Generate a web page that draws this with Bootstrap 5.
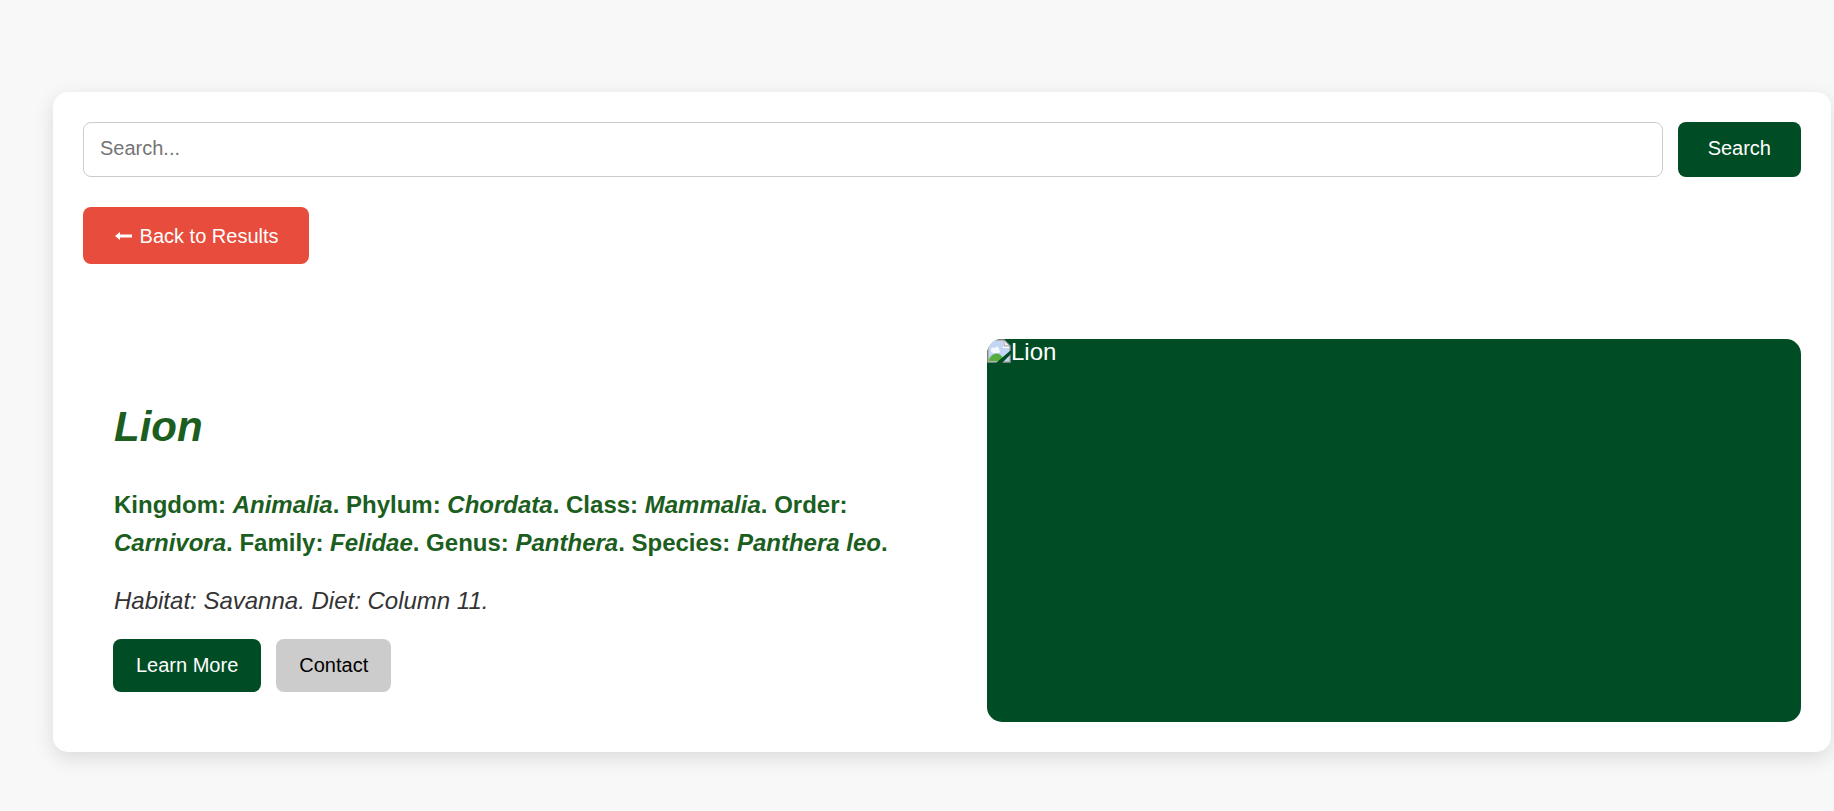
<!DOCTYPE html>
<html lang="en">
<head>
<meta charset="utf-8">
<meta name="viewport" content="width=device-width, initial-scale=1">
<title>Lion</title>
<link href="https://cdn.jsdelivr.net/npm/bootstrap@5.3.0/dist/css/bootstrap.min.css" rel="stylesheet">
<style>
  body { background: #f8f8f8; color: #333; font-family: "Liberation Sans", Arial, sans-serif; font-size: 24px; line-height: 38px; }
  .page-wrap { padding: 92px 3px 40px 53px; }
  .panel { background: #fff; border-radius: 15px; padding: 30px; box-shadow: 0 6px 20px rgba(0, 0, 0, .12); }
  .search-row { gap: 15px; margin-bottom: 30px; }
  .search-row .form-control { height: 55px; padding: 0 16px 2px; border: 1px solid #ccc; border-radius: 8px; font-size: 20px; }
  .form-control::placeholder { color: #757575; }
  .btn { border: 0; border-radius: 8px; font-size: 20px; line-height: 23px; padding: 15px 23px; }
  .btn-wide { padding: 15px 30px 17px; }
  .btn-forest, .btn-forest:hover { background: #004d25; color: #fff; }
  .btn-back, .btn-back:hover { background: #e74c3c; color: #fff; padding: 18px 30px 16px; }
  .btn-grey, .btn-grey:hover { background: #ccc; color: #000; }
  .detail { margin-top: 75px; gap: 30px; }
  .detail-text { flex: 1 1 0; padding: 30px; box-sizing: content-box; min-width: 0; }
  .detail-photo { flex: 1 1 0; min-width: 0; background: #004d25; color: #fff; border-radius: 15px; line-height: 26px; }
  .detail-photo svg { width: 24px; height: 24px; }
  h1 { color: #1b5e20; font-size: 42px; line-height: 66px; margin: 25px 0 26px; }
  .taxonomy { color: #1b5e20; margin-bottom: 20px; }
  .facts { margin-bottom: 19px; }
  h1, .taxonomy, .facts { padding-left: 1px; }
  .actions { gap: 15px; }
</style>
</head>
<body>
<main class="page-wrap">
  <section class="panel">
    <form class="search-row d-flex">
      <input class="form-control" id="query" type="text" placeholder="Search..." aria-label="Search">
      <button class="btn btn-wide btn-forest" type="button">Search</button>
    </form>
    <button class="btn btn-back d-flex align-items-center" type="button">
      <svg class="flex-shrink-0" width="21" height="20" viewBox="0 0 21 20" aria-hidden="true"><path fill="currentColor" d="M2 9L7 5v2.500h12v3H7V13z"/></svg><span>&nbsp;Back to Results</span>
    </button>
    <article class="detail d-flex">
      <div class="detail-text">
        <h1 class="fw-bold fst-italic">Lion</h1>
        <p class="taxonomy fw-bold">Kingdom: <em>Animalia</em>. Phylum: <em>Chordata</em>. Class: <em>Mammalia</em>. Order: <em>Carnivora</em>. Family: <em>Felidae</em>. Genus: <em>Panthera</em>. Species: <em>Panthera leo</em>.</p>
        <p class="facts fst-italic">Habitat: Savanna. Diet: Column 11.</p>
        <div class="actions d-flex">
          <button class="btn btn-forest" type="button">Learn More</button>
          <button class="btn btn-grey" type="button">Contact</button>
        </div>
      </div>
      <div class="detail-photo overflow-hidden">
        <div class="d-flex align-items-start">
          <svg viewBox="0 0 24 24" aria-hidden="true">
            <path fill="#fff" stroke="#999" stroke-width="1.500" d="M1 1h16l6 6v16H1z"/>
            <path fill="#c3d5f5" d="M2 2h14v7h6v13H2z"/>
            <path fill="#f4f8ff" d="M4 12c-1-4 3-4 4-3 2-3 5 0 4 2 2 1 1 3-1 3H6c-1 0-2-1-2-2z"/>
            <path fill="#57ad3d" d="M2 20c3-6 10-8 14-1l1 3H2z"/>
            <path fill="#eee" stroke="#999" d="M17 1v6h6z"/>
            <path fill="#004d25" d="M24 11v4L15 24H9z"/>
          </svg><span>Lion</span>
        </div>
      </div>
    </article>
  </section>
</main>
<script src="https://cdn.jsdelivr.net/npm/bootstrap@5.3.0/dist/js/bootstrap.bundle.min.js"></script>
</body>
</html>
